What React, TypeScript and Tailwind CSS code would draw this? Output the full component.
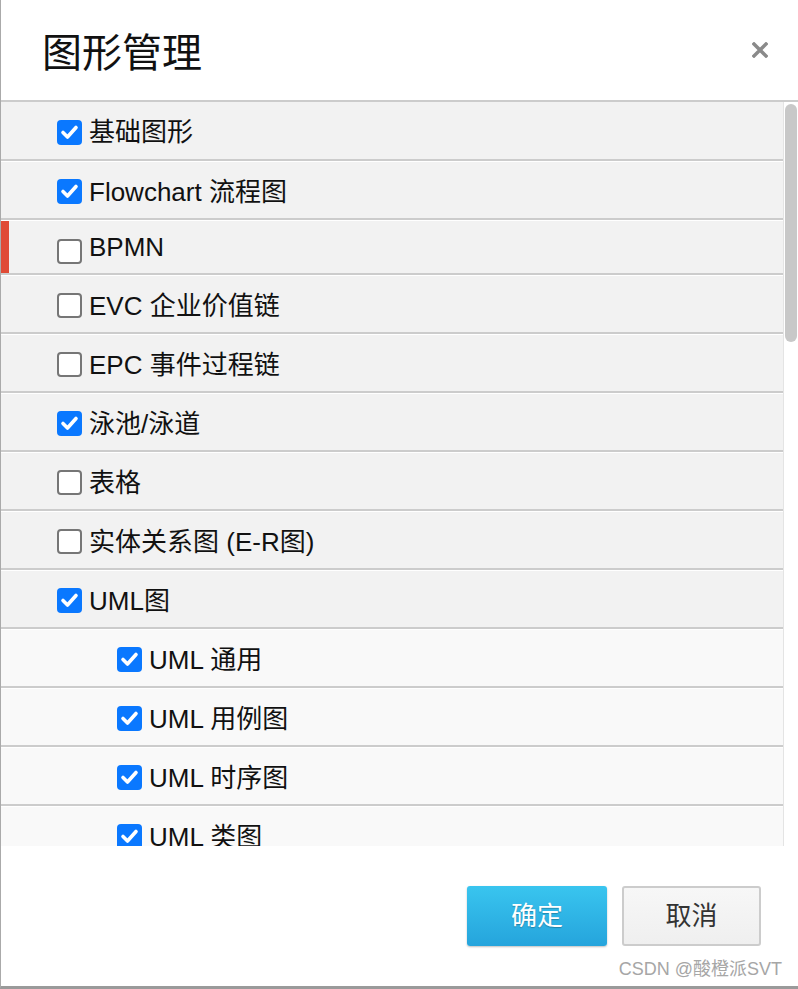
interface Item {
    label: string
    checked: boolean
    sub?: boolean
    marker?: boolean
    short?: boolean
}

const items: Item[] = [
    { label: "基础图形", checked: true },
    { label: "Flowchart 流程图", checked: true },
    { label: "BPMN", checked: false, marker: true, short: true },
    { label: "EVC 企业价值链", checked: false },
    { label: "EPC 事件过程链", checked: false },
    { label: "泳池/泳道", checked: true },
    { label: "表格", checked: false },
    { label: "实体关系图 (E-R图)", checked: false },
    { label: "UML图", checked: true },
    { label: "UML 通用", checked: true, sub: true },
    { label: "UML 用例图", checked: true, sub: true },
    { label: "UML 时序图", checked: true, sub: true },
    { label: "UML 类图", checked: true, sub: true },
]

const font = "font-['Liberation_Sans','Noto_Sans_CJK_SC',sans-serif]"

function Box({ checked, low }: { checked: boolean; low?: boolean }) {
    if (checked) {
        return (
            <span className={`flex h-[25px] w-[25px] shrink-0 items-center justify-center rounded-[4px] bg-[#0a78ff] ${low ? "mt-[8px]" : ""}`}>
                <svg width="25" height="25" viewBox="0 0 25 25" fill="none">
                    <path d="M6 12.5 L10.5 17 L19 7.5" stroke="white" strokeWidth="3.6" strokeLinecap="round" strokeLinejoin="round" />
                </svg>
            </span>
        )
    }
    return <span className={`block h-[25px] w-[25px] shrink-0 rounded-[4px] border-2 border-[#767676] bg-white ${low ? "mt-[8px]" : ""}`} />
}

function Row({ item, first }: { item: Item; first: boolean }) {
    const height = item.short ? "h-[55px]" : "h-[59px]"
    const bg = item.sub ? "bg-[#f9f9f9]" : "bg-[#f2f2f2]"
    const pad = item.sub ? "pl-[116px]" : item.marker ? "pl-[48px]" : "pl-[56px]"

    return (
        <div className={`flex shrink-0 items-stretch border-b-2 border-b-[#cccccc] ${first ? "" : "border-t border-t-white"} ${height} ${bg}`}>
            {item.marker && <div className="w-[8px] bg-[#e04b36]" />}
            <div className={`flex items-center gap-[7px] ${pad} ${item.short ? "" : "pt-[3px]"}`}>
                <Box checked={item.checked} low={item.marker} />
                <span className="text-[26px] leading-[26px] text-[#111]">{item.label}</span>
            </div>
        </div>
    )
}

export default function App() {
    return (
        <div className={`relative flex h-[989px] w-[798px] flex-col border-b-[3px] border-l border-b-[#9a9a9a] border-l-[#aaaaaa] bg-white ${font}`}>
            <div className="flex h-[100px] shrink-0 items-center justify-between pl-[41px] pr-[30px]">
                <h1 className="font-['Noto_Sans_CJK_SC',sans-serif] text-[40px] leading-[40px] text-[#111]">图形管理</h1>
                <svg width="16" height="16" viewBox="0 0 16 16">
                    <path d="M2 2 L14 14 M14 2 L2 14" stroke="#8a8a8a" strokeWidth="3.4" strokeLinecap="square" />
                </svg>
            </div>

            <div className="flex h-[746px] shrink-0 overflow-hidden border-t-2 border-t-[#cccccc]">
                <div className="flex flex-1 flex-col">
                    {items.map((item, i) => (
                        <Row key={item.label} item={item} first={i === 0} />
                    ))}
                </div>
                <div className="w-[15px] shrink-0 border-l border-l-[#e4e4e4] bg-white">
                    <div className="ml-[1px] mt-[2px] h-[238px] w-[12px] rounded-[6px] bg-[#c8c8c8]" />
                </div>
            </div>

            <div className="flex flex-1 items-start justify-end gap-[15px] pr-[37px] pt-[40px]">
                <button className="h-[60px] w-[140px] rounded-[3px] bg-linear-to-b from-[#39c5ef] to-[#25a4dc] text-[26px] text-white shadow-[0_1px_2px_rgba(0,0,0,0.25)] [text-shadow:0_1px_1px_rgba(0,0,0,0.25)]">
                    确定
                </button>
                <button className="h-[60px] w-[139px] rounded-[3px] border-2 border-[#cccccc] bg-linear-to-b from-[#f7f7f7] to-[#efefef] text-[26px] text-[#333]">
                    取消
                </button>
            </div>

            <span className="absolute bottom-[8px] right-[16px] text-[18px] leading-[18px] text-[#a6a6a6]">CSDN @酸橙派SVT</span>
        </div>
    )
}
